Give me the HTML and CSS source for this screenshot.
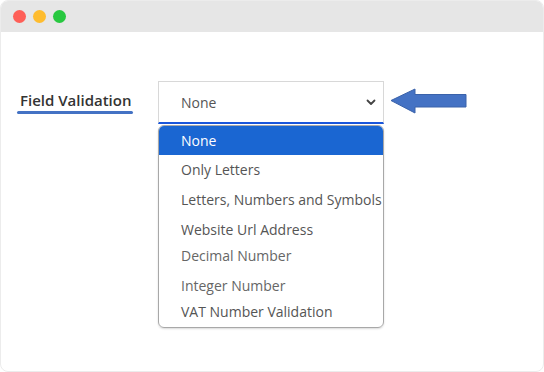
FILE: index.html
```html
<!DOCTYPE html>
<html lang="en">
<head>
    <meta charset="UTF-8">
    <meta name="viewport" content="width=device-width, initial-scale=1.0">
    <title>Field Validation</title>
    <link rel="stylesheet" href="styles.css">
</head>
<body>

<div class="window">
    <div class="titlebar">
        <span class="dot red"></span>
        <span class="dot yellow"></span>
        <span class="dot green"></span>
    </div>
    <div class="field">
        <div class="label-col">
            <span class="label">Field Validation</span>
        </div>
        <div class="select-col">
            <div class="select">
                <span>None</span>
                <svg class="chevron" width="10" height="7" viewBox="0 0 10 7">
                    <path d="M1.5 1.5 L5 5 L8.5 1.5" fill="none" stroke="#444" stroke-width="1.8" stroke-linecap="round" stroke-linejoin="round"/>
                </svg>
            </div>
            <ul class="options">
                <li class="active">None</li>
                <li>Only Letters</li>
                <li>Letters, Numbers and Symbols</li>
                <li>Website Url Address</li>
                <li class="short light">Decimal Number</li>
                <li class="light">Integer Number</li>
                <li class="short">VAT Number Validation</li>
            </ul>
        </div>
        <svg class="arrow" width="78" height="28" viewBox="0 0 78 28">
            <path d="M1 12.5 L25 1 L25 6.5 L76 6.5 L76 19 L25 19 L25 25 Z" fill="#4472c4" stroke="#3a62aa" stroke-width="1"/>
        </svg>
    </div>
</div>

</body>
</html>
```

FILE: styles.css
```css
body {
    margin: 0;
    background: #fff;
    font-family: "Open Sans", Arial, sans-serif;
}
.window {
    height: 372px;
    box-sizing: border-box;
    border: 1px solid #ececec;
    border-radius: 8px;
    overflow: hidden;
    background: #fff;
}
.titlebar {
    height: 31px;
    background: #e6e6e6;
    display: flex;
    align-items: center;
    gap: 7px;
    padding-left: 12px;
}
.dot {
    width: 13px;
    height: 13px;
    border-radius: 50%;
}
.red { background: #fe5f57; }
.yellow { background: #febc2e; }
.green { background: #28c840; }
.field {
    display: flex;
    align-items: flex-start;
    padding: 49px 0 0 16px;
}
.label-col {
    width: 141px;
    padding-top: 8px;
}
.label {
    display: inline-block;
    position: relative;
    padding: 0 2px 4px 3px;
    font-size: 15px;
    font-weight: 600;
    color: #333;
}
.label::after {
    content: "";
    position: absolute;
    left: 0;
    right: 0;
    bottom: 0;
    height: 3px;
    border-radius: 2px;
    background: #4472c4;
}
.select-col {
    width: 226px;
}
.select {
    height: 43px;
    box-sizing: border-box;
    border: 1px solid #d8d8d8;
    border-bottom: 2px solid #1a56db;
    display: flex;
    align-items: center;
    justify-content: space-between;
    padding: 0 7px 0 22px;
    font-size: 14px;
    color: #555;
}
.options {
    list-style: none;
    margin: 1px 0 0;
    padding: 0;
    border: 1px solid #a8a8a8;
    border-radius: 6px;
    overflow: hidden;
    box-shadow: 0 1px 2px rgba(0, 0, 0, 0.15);
}
.options li {
    height: 30px;
    line-height: 30px;
    padding-left: 22px;
    font-size: 14px;
    color: #555;
    white-space: nowrap;
}
.options li.short {
    height: 26px;
    line-height: 22px;
}
.options li.light {
    color: #666;
}
.options li.active {
    height: 29px;
    line-height: 29px;
    background: #1a66d2;
    color: #fff;
}
.arrow {
    margin: 7px 0 0 6px;
}
```
